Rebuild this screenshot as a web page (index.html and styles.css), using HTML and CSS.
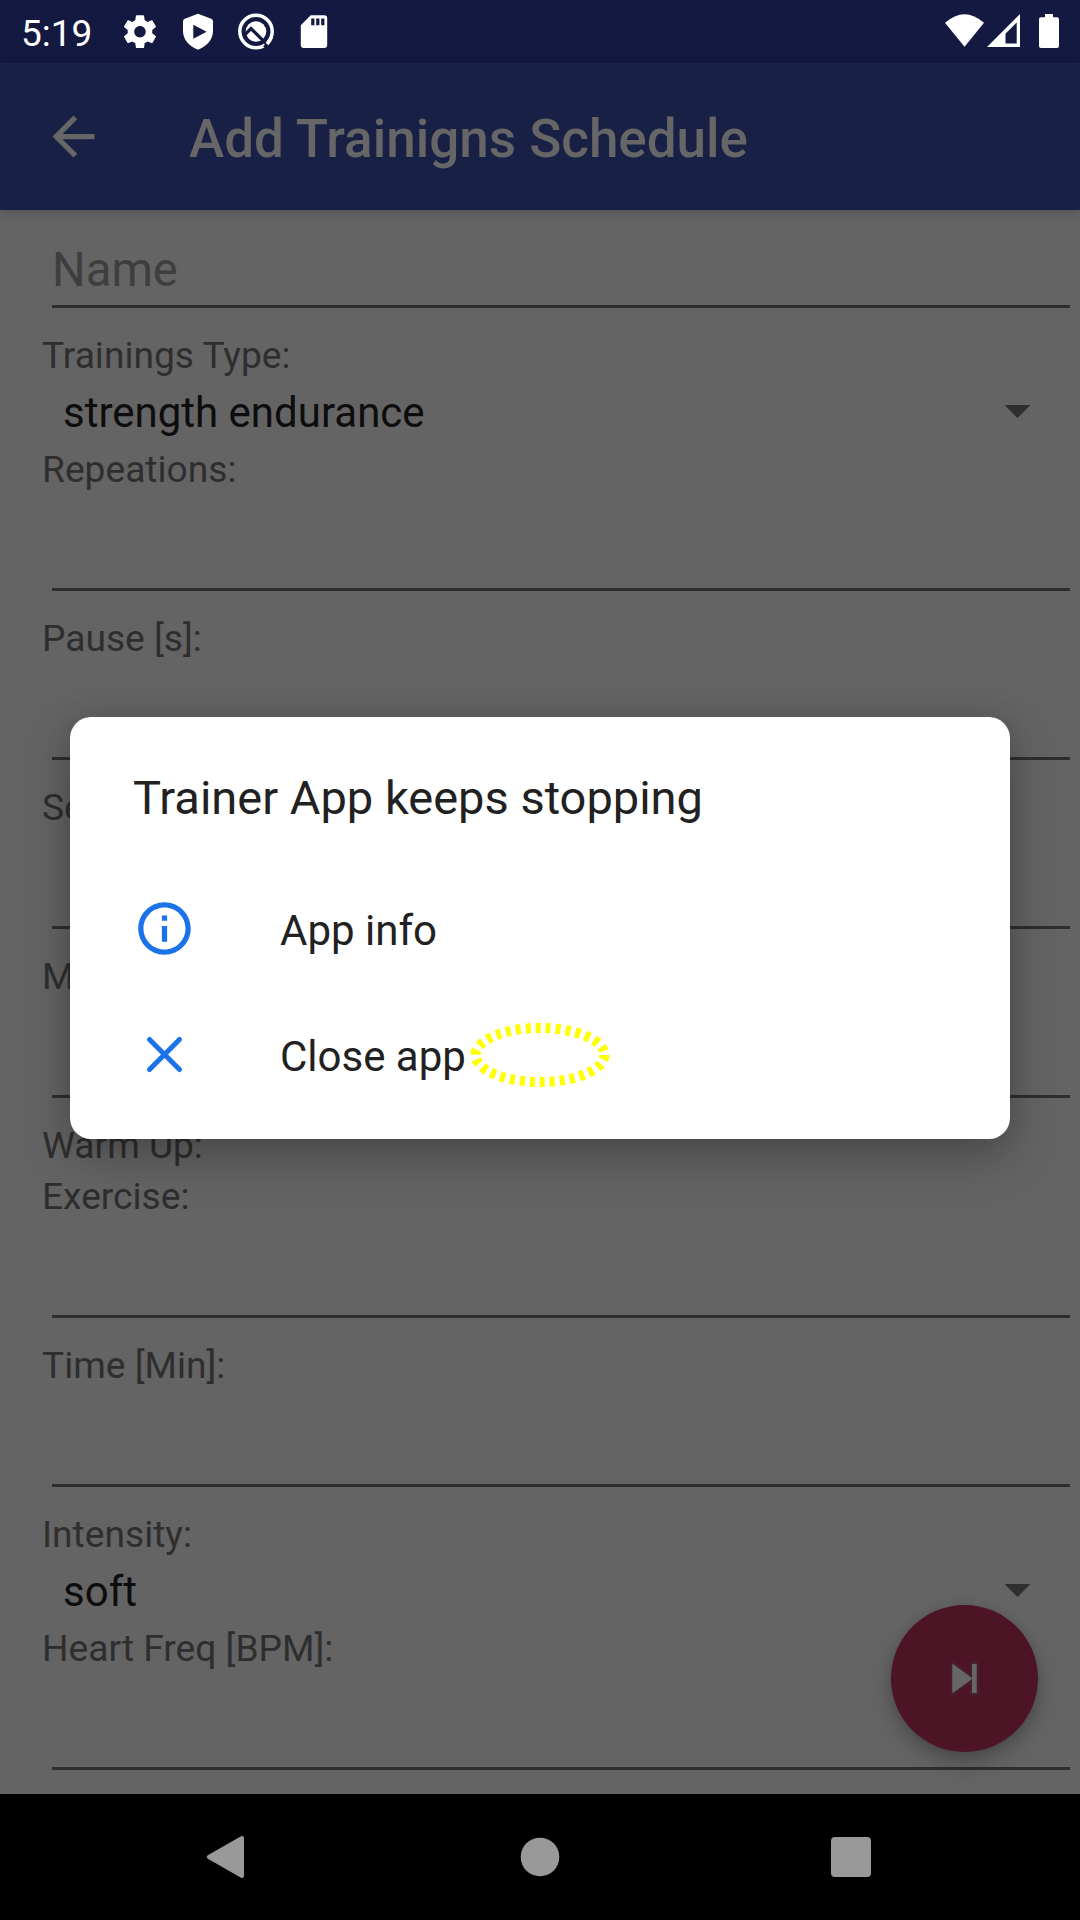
FILE: index.html
```html
<!DOCTYPE html>
<html lang="en">
<head>
<meta charset="utf-8">
<title>Add Trainigns Schedule</title>
<link rel="stylesheet" href="styles.css">
</head>
<body>
<div class="screen">
  <header class="status">
    <span class="clock">5:19</span>
    <svg class="notifications" width="220" height="63" viewBox="110 0 220 63" fill="#fff">
      <path transform="translate(120.3 12) scale(1.64)" d="M19.43 12.98c.04-.32.07-.64.07-.98s-.03-.66-.07-.98l2.11-1.65c.19-.15.24-.42.12-.64l-2-3.46c-.12-.22-.39-.3-.61-.22l-2.49 1c-.52-.4-1.08-.73-1.69-.98l-.38-2.65C14.46 2.18 14.25 2 14 2h-4c-.25 0-.46.18-.49.42l-.38 2.65c-.61.25-1.17.59-1.69.98l-2.49-1c-.23-.09-.49 0-.61.22l-2 3.46c-.13.22-.07.49.12.64l2.11 1.65c-.04.32-.07.65-.07.98s.03.66.07.98l-2.11 1.65c-.19.15-.24.42-.12.64l2 3.46c.12.22.39.3.61.22l2.49-1c.52.4 1.08.73 1.69.98l.38 2.65c.03.24.24.42.49.42h4c.25 0 .46-.18.49-.42l.38-2.65c.61-.25 1.17-.59 1.69-.98l2.49 1c.23.09.49 0 .61-.22l2-3.46c.12-.22.07-.49-.12-.64l-2.11-1.65zM12 15.500c-1.930 0-3.500-1.570-3.500-3.500s1.570-3.500 3.500-3.500 3.500 1.570 3.500 3.500-1.570 3.500-3.500 3.500z"/>
      <path fill-rule="evenodd" d="M198 13.700l13.200 5q1.800.7 1.800 2.600V31c0 8.500-6 15.500-15 18.700-9-3.200-15-10.200-15-18.700v-9.700q0-1.900 1.800-2.600zM193.300 24.700v14L206.600 31.700z"/>
      <circle cx="256" cy="31.500" r="16.200" fill="none" stroke="#fff" stroke-width="3.500"/>
      <circle cx="256" cy="31.500" r="10.300"/>
      <path d="M244.500 35l6.500-6.500 16.500 16.500" fill="none" stroke="#131940" stroke-width="3.200"/>
      <path d="M263 46l3.600-2.200 3 3.500-2 4z" fill="#131940"/>
      <path d="M267 44q2.700-2.800 4.200-6.500" fill="none" stroke="#fff" stroke-width="3.500"/>
      <path fill-rule="evenodd" d="M310.700 15.300h13.500q3 0 3 3v26.600q0 3-3 3h-20.400q-3 0-3-3V25.200zM311.200 18.600v6.600h3.200v-6.600zM316.200 18.600v6.600h3.200v-6.600zM321.200 18.600v6.600h3.200v-6.600z"/>
    </svg>
    <svg class="system" width="140" height="63" viewBox="940 0 140 63" fill="#fff">
      <path d="M945 22.800Q964.500 5.500 984 22.800L964.500 46.700z"/>
      <path fill-rule="evenodd" d="M1020 14v33h-33zM1016.700 22.500L1005.500 33.700v9.800h11.200z"/>
      <path d="M1045 14h8v3.200h4q2 0 2 2v26.800q0 2-2 2h-16q-2 0-2-2V19.200q0-2 2-2h4z"/>
    </svg>
  </header>

  <div class="appbar">
    <svg width="63" height="63" viewBox="0 0 24 24" fill="#666"><path d="M20 11H7.830l5.590-5.590L12 4l-8 8 8 8 1.410-1.410L7.830 13H20v-2z"/></svg>
    <h1>Add Trainigns Schedule</h1>
  </div>

  <main class="form">
    <div class="field name">Name</div>
    <div class="label">Trainings Type:</div>
    <div class="spinner"><span>strength endurance</span><i class="caret"></i></div>
    <div class="label">Repeations:</div>
    <div class="field"></div>
    <div class="label">Pause [s]:</div>
    <div class="field"></div>
    <div class="label">Sets:</div>
    <div class="field"></div>
    <div class="label">Max:</div>
    <div class="field"></div>
    <div class="label">Warm Up:</div>
    <div class="label">Exercise:</div>
    <div class="field"></div>
    <div class="label">Time [Min]:</div>
    <div class="field"></div>
    <div class="label">Intensity:</div>
    <div class="spinner"><span>soft</span><i class="caret"></i></div>
    <div class="label">Heart Freq [BPM]:</div>
    <div class="field"></div>
  </main>

  <nav class="navbar">
    <svg width="315" height="126" viewBox="68 1794 315 126"><path d="M208.800 1857L242 1838v38z" fill="#999" stroke="#999" stroke-width="4" stroke-linejoin="round"/></svg>
    <svg width="315" height="126" viewBox="383 1794 315 126"><circle cx="540" cy="1857" r="19.300" fill="#999"/></svg>
    <svg width="315" height="126" viewBox="698 1794 315 126"><rect x="831" y="1837" width="40" height="40" rx="4" fill="#999"/></svg>
  </nav>

  <div class="fab">
    <svg width="147" height="147" viewBox="891 1605 147 147"><g fill="#666" stroke="#46202c" stroke-width="4.500" stroke-linejoin="round" paint-order="stroke"><path d="M952.500 1664v29l20-14.500z"/><path d="M972 1664h4.700v29H972z"/></g><path d="M952.500 1664v29l20-14.500z" fill="#666"/></svg>
  </div>

  <section class="dialog">
    <h2>Trainer App keeps stopping</h2>
    <div class="action">
      <svg width="63" height="63" viewBox="0 0 24 24" fill="#1a73e8"><path d="M11 7h2v2h-2zm0 4h2v6h-2zm1-9C6.480 2 2 6.480 2 12s4.480 10 10 10 10-4.480 10-10S17.520 2 12 2zm0 18c-4.410 0-8-3.590-8-8s3.590-8 8-8 8 3.590 8 8-3.590 8-8 8z"/></svg>
      <span>App info</span>
    </div>
    <div class="action">
      <svg width="63" height="63" viewBox="0 0 63 63" fill="none" stroke="#1a73e8" stroke-width="5" stroke-linecap="round"><path d="M16.500 16.500l30 30M46.500 16.500l-30 30"/></svg>
      <span>Close app</span>
    </div>
    <svg class="touch" width="140" height="66" viewBox="0 0 140 66"><ellipse cx="70" cy="33" rx="64.500" ry="27" fill="none" stroke="#ff0" stroke-width="10" stroke-dasharray="5 5"/></svg>
  </section>
</div>
</body>
</html>
```

FILE: styles.css
```css
* { box-sizing: border-box; }
body { margin: 0; background: #000; font-family: Roboto, "Liberation Sans", sans-serif; }
svg { display: block; flex: none; }
.screen {
  position: relative;
  display: flex;
  flex-direction: column;
  width: 1080px;
  height: 1920px;
  overflow: hidden;
  background: #646464;
}

.status { display: flex; height: 63px; padding-left: 22px; background: #131940; flex: none; }
.clock { width: 88px; color: #fff; font-size: 37px; line-height: 67px; white-space: nowrap; text-indent: -1px; }
.system { margin-left: auto; }

.appbar {
  display: flex;
  align-items: center;
  gap: 84px;
  flex: none;
  height: 147px;
  padding-left: 42px;
  background: #192046;
  box-shadow: 0 2px 9px rgba(0, 0, 0, .2);
  z-index: 1;
}
.appbar h1 { margin: 5px 0 0; color: #666; font-size: 53px; font-weight: 500; line-height: 62px; white-space: nowrap; }

.form { flex: 1; min-height: 0; overflow: hidden; display: flex; flex-direction: column; }
.form > * { flex: none; }
.label { height: 51px; padding-left: 42px; color: #2e2e2e; font-size: 37.15px; line-height: 51px; white-space: nowrap; }
.field { height: 96px; margin: 0 10px 22px 52px; border-bottom: 3px solid #2e2e2e; }
.field.name { height: 98px; color: #3e3e3e; font-size: 47.25px; line-height: 121px; }
.spinner {
  display: flex;
  align-items: center;
  justify-content: space-between;
  height: 63px;
  padding: 0 49.5px 0 63px;
  color: #0d0d0d;
  font-size: 42px;
  line-height: 63px;
}
.caret { width: 26px; height: 13px; margin-bottom: 2px; background: #2e2e2e; clip-path: polygon(0 0, 100% 0, 50% 100%); }

.navbar { display: flex; justify-content: center; flex: none; height: 126px; background: #000; }

.fab {
  position: absolute;
  left: 891px;
  top: 1605px;
  width: 147px;
  height: 147px;
  border-radius: 50%;
  background: #4d1426;
  box-shadow: 0 10px 20px rgba(0, 0, 0, .25), 0 0 8px rgba(0, 0, 0, .08);
}

.dialog {
  position: absolute;
  left: 70px;
  top: 717px;
  width: 940px;
  height: 422px;
  padding: 49px 63px 21px;
  border-radius: 21px;
  background: #fff;
  box-shadow: 0 18px 50px rgba(0, 0, 0, .25), 0 0 26px rgba(0, 0, 0, .1);
  color: #212121;
}
.dialog h2 { margin: 0 0 35px; font-size: 47px; font-weight: 400; line-height: 64px; white-space: nowrap; }
.action { display: flex; align-items: center; gap: 84px; height: 126px; font-size: 42px; }
.action span { padding-top: 4px; }
.touch { position: absolute; left: 400px; top: 305px; }
```
